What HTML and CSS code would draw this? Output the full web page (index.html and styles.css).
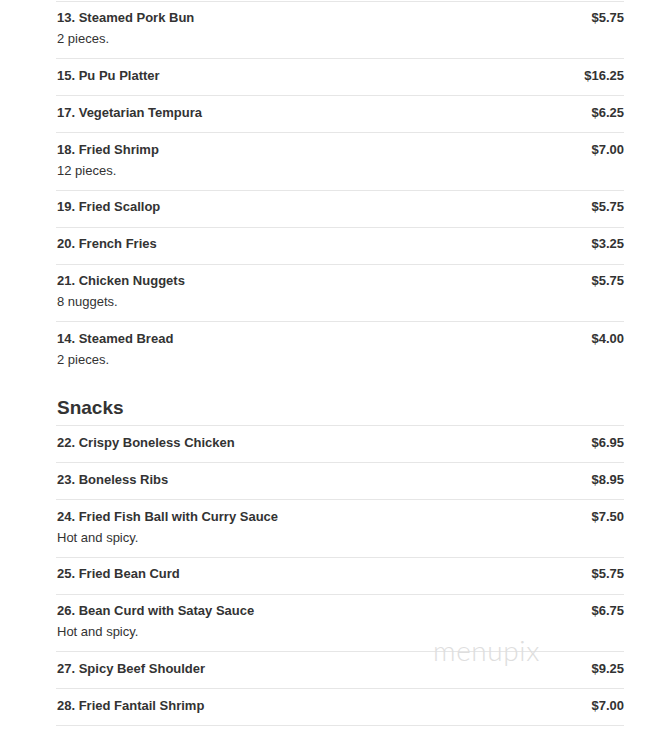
FILE: index.html
```html
<!DOCTYPE html>
<html>
<head>
<meta charset="utf-8">
<link rel="stylesheet" href="styles.css">
</head>
<body>
<div class="menu">
  <ul class="items">
    <li class="item"><div class="info"><div class="name">13. Steamed Pork Bun</div><div class="desc">2 pieces.</div></div><div class="price">$5.75</div></li>
    <li class="item"><div class="info"><div class="name">15. Pu Pu Platter</div></div><div class="price">$16.25</div></li>
    <li class="item"><div class="info"><div class="name">17. Vegetarian Tempura</div></div><div class="price">$6.25</div></li>
    <li class="item"><div class="info"><div class="name">18. Fried Shrimp</div><div class="desc">12 pieces.</div></div><div class="price">$7.00</div></li>
    <li class="item"><div class="info"><div class="name">19. Fried Scallop</div></div><div class="price">$5.75</div></li>
    <li class="item"><div class="info"><div class="name">20. French Fries</div></div><div class="price">$3.25</div></li>
    <li class="item"><div class="info"><div class="name">21. Chicken Nuggets</div><div class="desc">8 nuggets.</div></div><div class="price">$5.75</div></li>
    <li class="item"><div class="info"><div class="name">14. Steamed Bread</div><div class="desc">2 pieces.</div></div><div class="price">$4.00</div></li>
  </ul>
  <h2 class="section-title">Snacks</h2>
  <ul class="items last">
    <li class="item"><div class="info"><div class="name">22. Crispy Boneless Chicken</div></div><div class="price">$6.95</div></li>
    <li class="item"><div class="info"><div class="name">23. Boneless Ribs</div></div><div class="price">$8.95</div></li>
    <li class="item"><div class="info"><div class="name">24. Fried Fish Ball with Curry Sauce</div><div class="desc">Hot and spicy.</div></div><div class="price">$7.50</div></li>
    <li class="item"><div class="info"><div class="name">25. Fried Bean Curd</div></div><div class="price">$5.75</div></li>
    <li class="item"><div class="info"><div class="name">26. Bean Curd with Satay Sauce</div><div class="desc">Hot and spicy.</div></div><div class="price">$6.75</div></li>
    <li class="item"><div class="info"><div class="name">27. Spicy Beef Shoulder</div></div><div class="price">$9.25</div></li>
    <li class="item"><div class="info"><div class="name">28. Fried Fantail Shrimp</div></div><div class="price">$7.00</div></li>
  </ul>
</div>
<div class="watermark">menupix</div>
</body>
</html>
```

FILE: styles.css
```css
html, body {
  margin: 0;
  padding: 0;
  background: #ffffff;
}
body {
  font-family: "Liberation Sans", Arial, sans-serif;
  color: #333333;
  position: relative;
  min-height: 733px;
}
.menu {
  margin-left: 56px;
  width: 568px;
  padding-top: 0.5px;
}
.items {
  list-style: none;
  margin: 0;
  padding: 0;
}
.items.last {
  border-bottom: 1px solid #e6e6e6;
}
.item {
  display: flex;
  justify-content: space-between;
  align-items: flex-start;
  border-top: 1px solid #e6e6e6;
  padding: 7.5px 0 10.5px 1px;
}
.name {
  font-size: 13px;
  font-weight: bold;
  line-height: 18px;
}
.desc {
  font-size: 13px;
  line-height: 17.5px;
  margin-top: 3px;
}
.price {
  font-size: 13px;
  font-weight: bold;
  line-height: 18px;
  white-space: nowrap;
}
.section-title {
  font-size: 19px;
  font-weight: bold;
  line-height: 22px;
  margin: 18px 0 6.5px 1px;
}
.watermark {
  position: absolute;
  left: 433px;
  top: 633px;
  font-family: Lato, "Open Sans", sans-serif;
  font-weight: 300;
  font-size: 28px;
  letter-spacing: 0.6px;
  color: #dedede;
  pointer-events: none;
}
```
